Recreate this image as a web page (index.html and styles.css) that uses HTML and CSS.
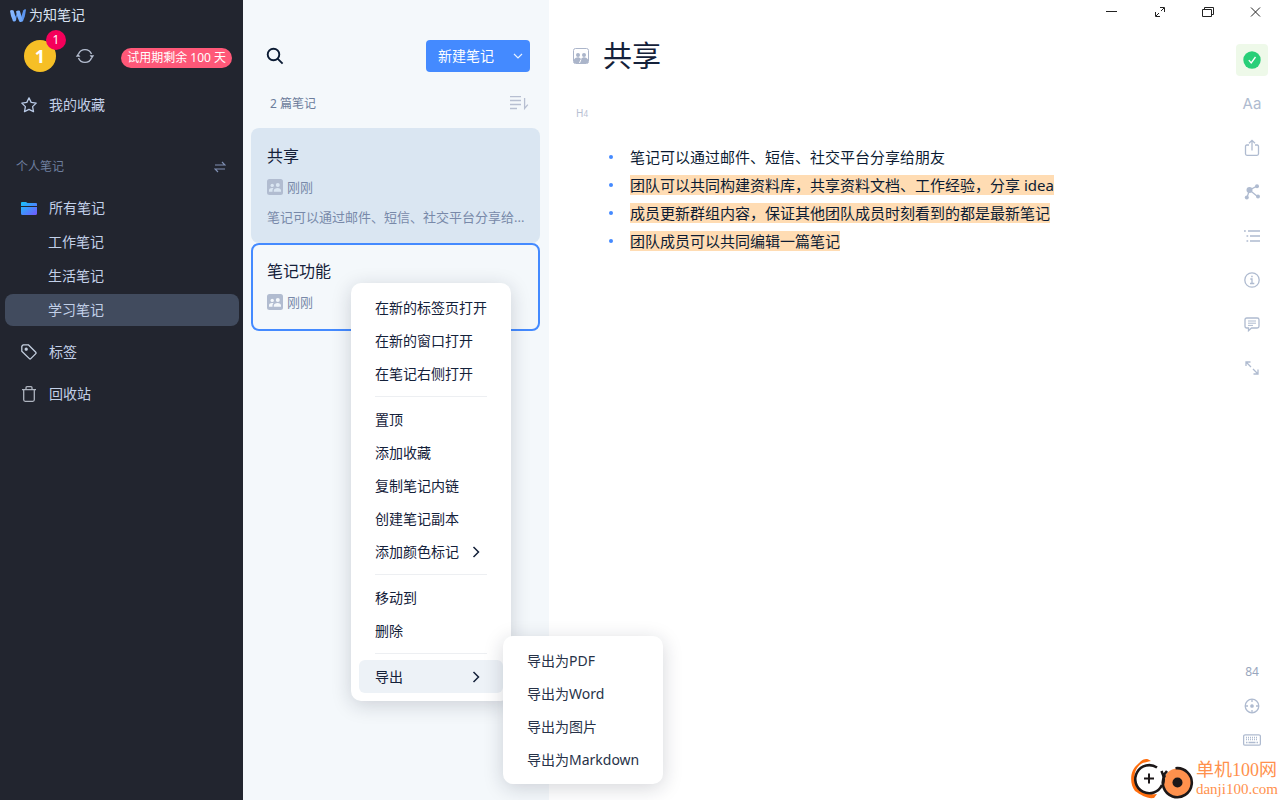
FILE: index.html
```html
<!DOCTYPE html>
<html lang="zh-CN">
<head>
<meta charset="utf-8">
<meta name="viewport" content="width=device-width, initial-scale=1">
<title>为知笔记</title>
<link rel="stylesheet" href="styles.css">
</head>
<body>
<svg class="defs" aria-hidden="true">
  <symbol id="people" viewBox="0 0 16 16">
    <rect width="16" height="16" rx="2.5" fill="currentColor"/>
    <g fill="var(--people-bg)"><circle cx="5.2" cy="6.4" r="1.7"/><circle cx="10.8" cy="6" r="2"/><path d="M2 12.800V11c0-1.300 1.400-2.100 3-2.100.6 0 1.100.1 1.500.3-.7.6-1 1.200-1 2v1.600zM6.800 12.800v-1.400c0-1.500 1.800-2.500 3.800-2.500s3.400 1 3.400 2.500v1.400z"/></g>
  </symbol>
  <symbol id="chevron" viewBox="0 0 8 12"><path d="M1.500 1l5 5-5 5" fill="none" stroke="currentColor" stroke-width="1.5"/></symbol>
</svg>
<div class="app">
  <nav class="sidebar">
    <div class="brand">
      <svg width="18" height="16" viewBox="0 0 18 16" fill="none"><defs><linearGradient id="wg" x1="0" y1="0" x2="1" y2="1"><stop stop-color="#8dbbff"/><stop offset="1" stop-color="#6aa5fb"/></linearGradient></defs><path d="M9.500 4L6.500 14.300 3.500 14z" fill="#4a83dd"/><path d="M14.200 3.500Q16 1.500 17 2.500 16.500 9 13.800 14.800L11.500 12.500z" fill="#5b94ee"/><path d="M1 3.800Q2.600 2.300 4.600 3.400L7.300 12.500Q6 15.500 4 14 1.500 9 1 3.800zM7 4.500Q8.800 2.700 10.800 3.800L13.800 13.500Q12.300 16 10.300 14.500 7.800 9.500 7 4.500z" fill="url(#wg)"/></svg>
      <span>为知笔记</span>
    </div>
    <div class="account">
      <button class="avatar" aria-label="账户">1<span class="badge">1</span></button>
      <button class="sync" aria-label="同步"><svg width="20" height="18" viewBox="0 0 20 18" fill="none" stroke="#b5bed0" stroke-width="1.400"><path d="M3.500 7A7 7 0 0 1 16.500 7M16.500 11A7 7 0 0 1 3.500 11"/><path d="M.8 9.800h4.600L3 6.600zM14.600 8.200h4.600L17 11.400z" fill="#b5bed0" stroke="none"/></svg></button>
      <a class="trial" href="#">试用期剩余 100 天</a>
    </div>
    <a class="nav-item favorite" href="#"><svg width="16" height="16" viewBox="0 0 16 16" fill="none" stroke="#b9cae6" stroke-width="1.300" stroke-linejoin="round"><path d="M8 .9l2.200 4.500 5 .7-3.600 3.500.9 5L8 12.300l-4.500 2.300.9-5L.8 6.100l5-.7z"/></svg>我的收藏</a>
    <div class="section"><span>个人笔记</span><button aria-label="切换"><svg width="12" height="12" viewBox="0 0 12 12" fill="none" stroke="#8090b4" stroke-width="1.200"><path d="M1 4h10L8 1M11 8H1l3 3"/></svg></button></div>
    <ul class="tree">
      <li><a class="nav-item" href="#"><svg width="16" height="16" viewBox="0 0 16 16"><defs><linearGradient id="fg" x1="0" y1="0" x2="1" y2="1"><stop stop-color="#14c5fa"/><stop offset="1" stop-color="#7357ff"/></linearGradient></defs><path d="M0 3Q0 2 1 2H5l1.500 1H15q1 0 1 1v2H0zM0 7h16v6.500q0 1.500-1.500 1.500h-13Q0 15 0 13.500z" fill="url(#fg)"/></svg>所有笔记</a></li>
      <li><a class="nav-item child" href="#">工作笔记</a></li>
      <li><a class="nav-item child" href="#">生活笔记</a></li>
      <li><a class="nav-item child selected" href="#">学习笔记</a></li>
    </ul>
    <a class="nav-item extra" href="#"><svg width="16" height="16" viewBox="0 0 16 16" fill="none" stroke="#c3cede" stroke-width="1.300" stroke-linejoin="round"><path d="M.8 2.300L2.300.8h5l7.500 7.500q.6.700 0 1.300l-5 5q-.7.700-1.400 0L.8 7.200z"/><circle cx="5.200" cy="5.200" r="1" fill="#c3cede"/></svg>标签</a>
    <a class="nav-item extra" href="#"><svg width="16" height="16" viewBox="0 0 16 16" fill="none" stroke="#aeb4bf" stroke-width="1.300"><path d="M1 3.700h14M5 3.500V1.700Q5 .7 6 .7h4q1 0 1 1v1.800M2.700 4v9.800q0 1.500 1.500 1.500h7.600q1.500 0 1.500-1.500V4"/></svg>回收站</a>
  </nav>

  <section class="notes">
    <div class="toolbar">
      <button class="search" aria-label="搜索"><svg width="18" height="18" viewBox="0 0 18 18" fill="none" stroke="#0b1b33" stroke-width="1.900"><circle cx="7.500" cy="7.500" r="5.800"/><path d="M11.600 11.600l5 5"/></svg></button>
      <div class="create"><button class="create-main">新建笔记</button><button class="create-more" aria-label="更多"><svg width="10" height="8" viewBox="0 0 10 8" fill="none" stroke="#e6f0ff" stroke-width="1.200"><path d="M1 2l4 4 4-4"/></svg></button></div>
    </div>
    <div class="count"><span>2 篇笔记</span><button aria-label="排序"><svg width="20" height="16" viewBox="0 0 20 16" fill="none" stroke="#b7bfd1" stroke-width="1.300"><path d="M1 .5h11M1 4.500h11M1 8.500h11M1 12.500h7M15.600 2v10.500l3.200-3.800"/></svg></button></div>
    <article class="card active"><h2>共享</h2><p class="meta"><svg width="16" height="16"><use href="#people"/></svg>刚刚</p><p class="excerpt">笔记可以通过邮件、短信、社交平台分享给...</p></article>
    <article class="card outlined"><h2>笔记功能</h2><p class="meta"><svg width="16" height="16"><use href="#people"/></svg>刚刚</p></article>
  </section>

  <main class="main">
    <div class="window-controls">
      <button aria-label="最小化"><svg width="12" height="12" viewBox="0 0 12 12" stroke="#222"><path d="M0 5.500h11"/></svg></button>
      <button aria-label="全屏"><svg width="12" height="12" viewBox="0 0 12 12" fill="none" stroke="#222"><path d="M6 1.500h4.500V6M1.500 6v4.500H6M10 2L7 5M5 7l-3 3"/></svg></button>
      <button aria-label="还原"><svg width="12" height="12" viewBox="0 0 12 12" fill="none" stroke="#222"><path d="M.5 3.500h9v7h-9zM2.500 3V1.500h9v7H10"/></svg></button>
      <button aria-label="关闭"><svg width="12" height="12" viewBox="0 0 12 12" stroke="#222"><path d="M1 1.500l9 9M10 1.500l-9 9"/></svg></button>
    </div>
    <div class="workspace">
      <article class="editor">
        <header><svg class="title-icon" width="16" height="16" viewBox="0 0 16 16"><rect x=".5" y=".5" width="15" height="15" rx="2" fill="#fff" stroke="#abb5ca"/><path d="M1 11.500c2-2.500 5-3 7-.5 2-2.800 5-2.300 7 .5V15H1z" fill="#abb5ca"/><circle cx="5" cy="7" r="2" fill="#abb5ca"/><circle cx="11" cy="7" r="2" fill="#abb5ca"/><path d="M8 11.500l-1.500 3.500" stroke="#fff"/></svg><h1>共享</h1></header>
        <div class="level">H<small>4</small></div>
        <ul>
          <li><span>笔记可以通过邮件、短信、社交平台分享给朋友</span></li>
          <li><mark>团队可以共同构建资料库，共享资料文档、工作经验，分享 idea</mark></li>
          <li><mark>成员更新群组内容，保证其他团队成员时刻看到的都是最新笔记</mark></li>
          <li><mark>团队成员可以共同编辑一篇笔记</mark></li>
        </ul>
      </article>
      <aside class="rail">
        <div class="tools">
          <button class="saved" aria-label="已保存"><svg width="18" height="18" viewBox="0 0 18 18"><circle cx="9" cy="9" r="8.700" fill="#28cf78"/><path d="M5.800 9.200l2.400 2.800L12.500 6" fill="none" stroke="#fff" stroke-width="1.300"/></svg></button>
          <button class="letters">Aa</button>
          <button aria-label="分享"><svg width="16" height="18" viewBox="0 0 16 18"><path d="M5 6H2.800Q1.500 6 1.500 7.500v7.300Q1.500 16.300 3 16.300h10q1.500 0 1.500-1.500V7.500Q14.500 6 13.200 6H11M8 11.500V1.500M5 4.300l3-3 3 3"/></svg></button>
          <button aria-label="关系图"><svg width="16" height="16" viewBox="0 0 16 16"><path d="M5.500 6L13 2.200M5.500 6l8 6.500M5.500 6L3 13.500"/><g fill="currentColor" stroke="none"><circle cx="5.500" cy="6" r="3"/><circle cx="13" cy="2.300" r="2"/><circle cx="14" cy="12.500" r="2"/><circle cx="2.800" cy="13.500" r="2"/></g></svg></button>
          <button aria-label="大纲"><svg width="16" height="14" viewBox="0 0 16 14"><path d="M0 2h1.800M4 2h12M2.500 7h1.700M6 7h10M2.500 12h1.700M6 12h10"/></svg></button>
          <button aria-label="信息"><svg width="16" height="16" viewBox="0 0 16 16"><circle cx="8" cy="8" r="7.200"/><path d="M6.300 7H8v4.500M6 11.500h4.300M7.200 4.500h1.500"/></svg></button>
          <button aria-label="评论"><svg width="16" height="16" viewBox="0 0 16 16"><path d="M2.800 2h10.400q1.800 0 1.800 1.800v6.400q0 1.800-1.800 1.800H7.500l-3 2.700V12H2.800Q1 12 1 10.200V3.800Q1 2 2.800 2z"/><path d="M4 5h8M4 7.200h8M4 9.400h5" stroke-width="1"/></svg></button>
          <button aria-label="展开"><svg width="16" height="16" viewBox="0 0 16 16"><path d="M2 6V2h4.500M2 2l5 5M14 9.500V14H9.500M14 14L9 9"/></svg></button>
        </div>
        <div class="status">
          <span>84</span>
          <button aria-label="专注"><svg width="16" height="16" viewBox="0 0 16 16"><circle cx="8" cy="8" r="6.800"/><circle cx="8" cy="8" r="1.200" fill="currentColor"/><path d="M8 1v3M8 12v3M1 8h3M12 8h3"/></svg></button>
          <button aria-label="键盘"><svg width="18" height="12" viewBox="0 0 18 12"><rect x=".6" y=".8" width="16.800" height="10.400" rx="1.500"/><path d="M3 3.500h12M3 5.500h12" stroke-dasharray="1 1"/><path d="M3 8.500h1.500M5.500 8.500h7M13.500 8.500H15"/></svg></button>
        </div>
      </aside>
    </div>
  </main>

  <div class="menu" role="menu">
    <button role="menuitem">在新的标签页打开</button><button role="menuitem">在新的窗口打开</button><button role="menuitem">在笔记右侧打开</button>
    <hr>
    <button role="menuitem">置顶</button><button role="menuitem">添加收藏</button><button role="menuitem">复制笔记内链</button><button role="menuitem">创建笔记副本</button><button role="menuitem">添加颜色标记<svg width="8" height="12"><use href="#chevron"/></svg></button>
    <hr>
    <button role="menuitem">移动到</button><button role="menuitem">删除</button>
    <hr>
    <div class="has-submenu">
      <button class="hovered" role="menuitem" aria-haspopup="true">导出<svg width="8" height="12"><use href="#chevron"/></svg></button>
      <div class="menu submenu" role="menu"><button role="menuitem">导出为PDF</button><button role="menuitem">导出为Word</button><button role="menuitem">导出为图片</button><button role="menuitem">导出为Markdown</button></div>
    </div>
  </div>

  <div class="watermark">
    <svg width="64" height="42" viewBox="0 0 64 42" fill="none"><path d="M21 3C15-2 11 3 8 6 0 12-1 25 5 33c6 4 12 8 19 7l3-4c-8 1-15 0-19-6C3 22 3 12 11 6c3-2 7-2 10-3z" fill="#ff6e0e"/><circle cx="19" cy="21" r="13.500" fill="#fff"/><path d="M27 9.500A14 14 0 1 0 32 27" stroke="#1c1718" stroke-width="2.600"/><circle cx="47.500" cy="24.500" r="14" fill="#ff914d"/><path d="M45.500 10.300A14.500 14.500 0 1 1 35 17M31.500 13Q35 20 33 26M33 18l4-5" stroke="#1c1718" stroke-width="2.600"/><circle cx="47.500" cy="24.500" r="5" fill="#1c1718"/><path d="M14 20.500h10M19 15.500v10" stroke="#1c1718" stroke-width="2"/></svg>
    <div><strong>单机100网</strong><span>danji100.com</span></div>
  </div>
</div>
</body>
</html>
```

FILE: styles.css
```css
* { box-sizing: border-box; }
body, h1, h2, p, ul { margin: 0; padding: 0; }
body {
  color: #14213a;
  font: 14px/20px "Noto Sans", "Noto Sans CJK SC", sans-serif;
}
button { border: 0; padding: 0; background: none; color: inherit; font: inherit; cursor: pointer; }
button, a { display: flex; align-items: center; justify-content: center; }
a { color: inherit; text-decoration: none; }
ul { list-style: none; }
svg { flex: none; display: block; }
.defs { position: absolute; width: 0; height: 0; }

.app {
  position: relative;
  display: grid;
  grid-template-columns: 243px 306px minmax(0, 1fr);
  min-height: 100vh;
  overflow: hidden;
}

/* Sidebar */
.sidebar { background: #22252f; color: #c2d0e8; }
.brand { display: flex; align-items: center; gap: 2px; height: 30px; padding-left: 9px; color: #d9e3f2; }
.account { display: flex; align-items: center; height: 52px; padding: 0 11px 0 24px; }
.avatar {
  position: relative;
  width: 32px;
  height: 32px;
  border-radius: 50%;
  background: #f6bf26;
  color: #fff;
  font-size: 18px;
  font-weight: 700;
}
.badge {
  position: absolute;
  top: -10px;
  right: -10px;
  width: 20px;
  border-radius: 10px;
  background: #f5005a;
  font-size: 12px;
  font-weight: 400;
}
.sync { margin-left: 19px; }
.trial {
  margin: 3px 0 0 auto;
  padding: 0 6px;
  border-radius: 10px;
  background: #ff5878;
  color: #fff;
  font-size: 12px;
}
.nav-item {
  justify-content: flex-start;
  gap: 12px;
  height: 32px;
  margin: 0 4px 2px 5px;
  padding-left: 16px;
  border-radius: 8px;
}
.nav-item.favorite { margin-top: 7px; }
.child { padding-left: 43px; }
.selected { background: #414b5e; }
.extra { margin-top: 10px; }
.section {
  display: flex;
  align-items: center;
  justify-content: space-between;
  margin: 36px 17px 15px 16px;
  color: #6e7f9f;
  font-size: 12px;
}

/* Note list */
.notes { padding: 40px 9px 0 8px; background: #f4f8fb; }
.toolbar, .count { display: flex; align-items: center; justify-content: space-between; }
.toolbar { padding: 0 10px 0 15px; }
.create { display: flex; overflow: hidden; border-radius: 4px; background: #448aff; color: #fff; }
.create-main { height: 32px; padding-left: 12px; }
.create-more { width: 24px; margin-left: 12px; }
.count { height: 56px; padding: 8px 11px 0 19px; color: #6d7d9b; font-size: 12px; }
.card { padding: 16px; border-radius: 8px; }
.card h2 { font-size: 16px; font-weight: 400; line-height: 24px; }
.card p { margin-top: 10px; color: #7889a9; font-size: 13px; }
.card .meta { display: flex; align-items: center; gap: 4px; margin-top: 9px; }
.meta svg { color: #b1bcd0; --people-bg: #dae6f2; }
.card.active { background: #dae6f2; }
.card .excerpt { white-space: nowrap; }
.card.outlined { padding: 14px 14px 17px; border: 2px solid #448aff; }
.outlined .meta svg { --people-bg: #f4f8fb; }

/* Editor */
.main { display: flex; flex-direction: column; background: #fff; }
.window-controls { display: flex; justify-content: flex-end; height: 24px; }
.window-controls button { width: 48px; }
.workspace { display: flex; flex: 1; justify-content: space-between; }
.editor { flex: 1; min-width: 0; padding: 12px 24px; }
.editor header { display: flex; align-items: center; gap: 14px; height: 40px; }
h1 { font-size: 29px; font-weight: 400; line-height: 40px; }
.level { display: flex; align-items: baseline; margin: 27px 0 19px 3px; color: #b7c0d2; font-size: 10px; }
.level small { font-size: 8px; }
.editor ul { padding-left: 36px; font-size: 15px; color: #0b1b33; }
.editor li { display: flex; align-items: center; gap: 17px; min-height: 28px; }
.editor li::before { content: ""; flex: none; width: 4px; height: 4px; border-radius: 50%; background: #448aff; }
mark { background: #ffdcb3; color: inherit; }
.rail { display: flex; flex-direction: column; justify-content: space-between; padding: 20px 12px 50px 0; color: #afbbd0; }
.rail svg { fill: none; stroke: currentColor; stroke-width: 1.3; }
.tools { display: grid; gap: 12px; }
.tools button { width: 32px; height: 32px; }
.tools .saved { border-radius: 4px; background: #eef9e9; }
.saved svg { stroke: none; }
.letters { font-family: Inter, sans-serif; font-size: 15px; }
.status { display: flex; flex-direction: column; align-items: center; gap: 14px; color: #99a7be; font-size: 12px; }
.status button { height: 20px; color: #afbbd0; }

/* Context menu */
.menu {
  position: absolute;
  top: 283px;
  left: 351px;
  width: 160px;
  padding: 8px;
  border-radius: 10px;
  background: #fff;
  box-shadow: 0 4px 20px rgba(20, 30, 50, 0.18);
}
.menu button { justify-content: space-between; width: 100%; height: 33px; padding: 0 23px 0 16px; white-space: nowrap; }
.menu hr { height: 1px; margin: 6px 16px; border: 0; background: #edeff2; }
.has-submenu { position: relative; }
.menu .hovered { border-radius: 6px; background: #edf2f7; }
.submenu { top: -24px; left: 144px; }
.submenu button { padding-right: 0; color: #273248; }

/* Corner mark */
.watermark {
  position: absolute;
  right: 2px;
  bottom: 0;
  display: flex;
  align-items: center;
  gap: 2px;
  color: #ff914d;
  font-family: "Liberation Serif", "Noto Sans CJK SC", serif;
}
.watermark strong, .watermark span { display: block; }
.watermark strong { font-size: 18px; font-weight: 400; line-height: 20px; }
.watermark span { font-size: 15px; line-height: 18px; }
```
